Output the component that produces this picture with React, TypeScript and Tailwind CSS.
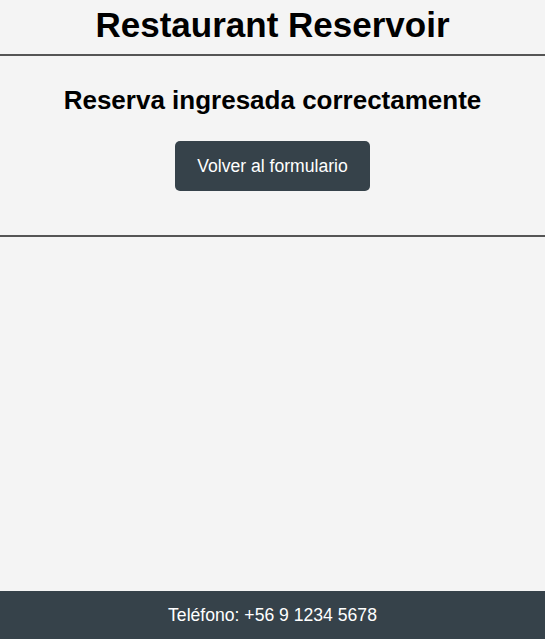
export default function App() {
  return (
    <div className="min-h-screen flex flex-col bg-[#f4f4f4] text-black" style={{ fontFamily: '"Liberation Sans", Arial, sans-serif' }}>
      <header className="border-b-2 border-[#555] pt-[3px] pb-[7px]">
        <h1 className="text-center text-[35px] font-bold leading-[44px]">Restaurant Reservoir</h1>
      </header>
      <section className="border-b-2 border-[#555] flex flex-col items-center pt-[28px] pb-[44px]">
        <h2 className="text-[26px] font-bold leading-[33px]">Reserva ingresada correctamente</h2>
        <button className="mt-[24px] h-[50px] w-[195px] rounded-[5px] bg-[#36424a] text-white text-[17.6px]">
          Volver al formulario
        </button>
      </section>
      <div className="flex-1" />
      <footer className="bg-[#36424a] text-white text-center text-[17.6px] h-[48px] flex items-center justify-center">
        Teléfono: +56 9 1234 5678
      </footer>
    </div>
  )
}
